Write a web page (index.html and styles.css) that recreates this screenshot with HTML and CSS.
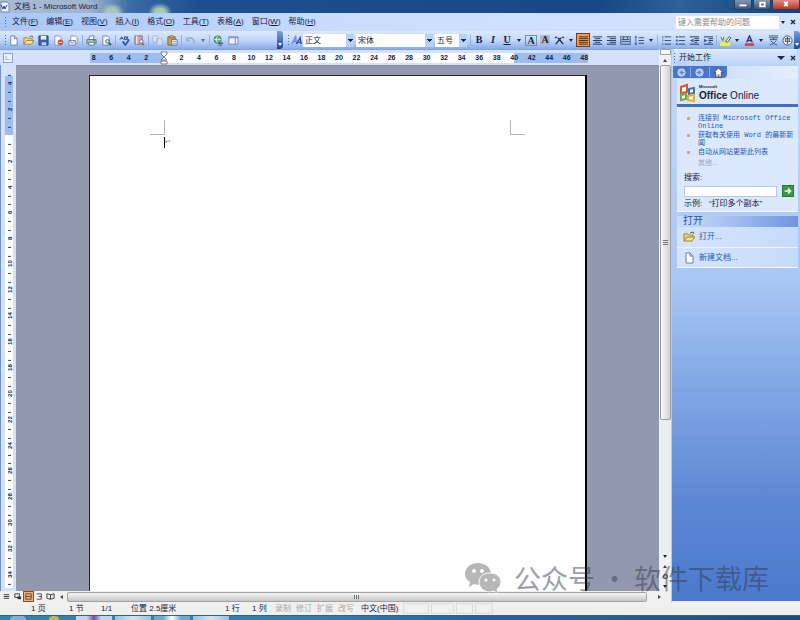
FILE: index.html
```html
<!DOCTYPE html>
<html lang="zh-CN">
<head>
<meta charset="utf-8">
<title>文档 1 - Microsoft Word</title>
<link rel="stylesheet" href="styles.css">
</head>
<body>
<div class="app">
  <header class="titlebar">
    <svg class="appicon" viewBox="0 0 10 12"><path d="M1 1h6l2 2v8H1z" fill="#eef4ff" stroke="#6c86b5"/><path d="M1 4l2 4 1-3 1 3 2-4" fill="none" stroke="#1d4fae"/></svg>
    <h1>文档 1 - Microsoft Word</h1>
    <div class="wincontrols">
      <button aria-label="最小化"><svg viewBox="0 0 12 10"><path d="M2 6h8" stroke="#fff" stroke-width="2"/></svg></button>
      <button aria-label="还原"><svg viewBox="0 0 12 10"><path d="M4 3h5v4H4z" fill="none" stroke="#fff" stroke-width="2"/></svg></button>
      <button class="close" aria-label="关闭"><svg viewBox="0 0 12 10"><path d="M4 2l4 5M8 2l-4 5" stroke="#fff" stroke-width="2"/></svg></button>
    </div>
  </header>

  <nav class="menubar">
    <i class="grip"></i>
    <button>文件(<u>F</u>)</button><button>编辑(<u>E</u>)</button><button>视图(<u>V</u>)</button><button>插入(<u>I</u>)</button><button>格式(<u>O</u>)</button><button>工具(<u>T</u>)</button><button>表格(<u>A</u>)</button><button>窗口(<u>W</u>)</button><button>帮助(<u>H</u>)</button>
    <input class="ask" type="text" aria-label="帮助" placeholder="键入需要帮助的问题">
    <button class="tiny" aria-label="更多"><i class="caret"></i></button>
    <button class="tiny" aria-label="关闭文档"><svg viewBox="0 0 8 8"><path d="M2 2l4 4M6 2L2 6" stroke="#17264d" stroke-width="1.4"/></svg></button>
  </nav>

  <div class="toolbars">
    <div class="toolbar standard">
      <i class="grip"></i>
      <button aria-label="新建"><svg viewBox="0 0 12 12"><path d="M3 1h4l3 3v7H3z" fill="#fff" stroke="#6d7f9f"/><path d="M7 1v3h3" fill="none" stroke="#6d7f9f"/></svg></button>
      <button aria-label="打开"><svg viewBox="0 0 12 12"><path d="M1 10V3h4l1 1h4v2" fill="#f6d873" stroke="#a5802c"/><path d="M1 10l3-4h8l-3 4z" fill="#fbe596" stroke="#a5802c"/><path d="M7 2l3-1 1 2" fill="none" stroke="#44618f"/></svg></button>
      <button aria-label="保存"><svg viewBox="0 0 12 12"><path d="M1 1h10v10H1z" fill="#3f62b4" stroke="#27408a"/><path d="M3 1h6v4H3z" fill="#eaf1ff"/><path d="M4 8h5v3H4z" fill="#c9d3ea"/></svg></button>
      <button aria-label="权限"><svg viewBox="0 0 12 12"><path d="M2 1h5l2 2v8H2z" fill="#fff" stroke="#8190ad"/><circle cx="8" cy="8" r="3" fill="#d24a36"/><path d="M6 8h4" stroke="#fff"/></svg></button>
      <button aria-label="电子邮件"><svg viewBox="0 0 12 12"><path d="M3 1h5l2 2v6H3z" fill="#fff" stroke="#8190ad"/><path d="M1 6h7v5H1zM1 6l3.500 3L8 6" fill="#eef2fc" stroke="#7786ab"/></svg></button>
      <i class="sep"></i>
      <button aria-label="打印"><svg viewBox="0 0 12 12"><path d="M4 1h5l-1 4H3z" fill="#fff" stroke="#697c91"/><path d="M1 5h10v4H1z" fill="#b5c7d0" stroke="#55707b"/><path d="M3 8h6v3H3z" fill="#fff" stroke="#55707b"/><path d="M8 6h2" stroke="#2a9d4a" stroke-width="2"/></svg></button>
      <button aria-label="打印预览"><svg viewBox="0 0 12 12"><path d="M2 1h5l2 2v8H2z" fill="#fff" stroke="#697c9d"/><circle cx="7" cy="7" r="2" fill="#bde7ee" stroke="#3e6d7a"/><path d="M8.500 8.500L11 11" stroke="#3e5b6a" stroke-width="2"/></svg></button>
      <i class="sep"></i>
      <button aria-label="拼写和语法"><svg viewBox="0 0 12 12"><path d="M1 5l2-3 2 3M2 4h2M6 2v3h2V2zM10 2H9v3h2" fill="none" stroke="#2c437e"/><path d="M4 7l3 4 4-6" fill="none" stroke="#2f59b7" stroke-width="2"/></svg></button>
      <button aria-label="信息检索"><svg viewBox="0 0 12 12"><path d="M1 1h8v9H1z" fill="#d9a7a3" stroke="#8a6583"/><path d="M3 1v9" stroke="#fff"/><circle cx="8" cy="7" r="2" fill="#e9efff" stroke="#5f6d94"/><path d="M9 9l2 2" stroke="#b16b36" stroke-width="2"/></svg></button>
      <i class="sep"></i>
      <button class="dim" aria-label="复制"><svg viewBox="0 0 12 12"><path d="M1 1h5v7H1zM5 4h6v7H5z" fill="#e7ecf6" stroke="#9aa9c7"/></svg></button>
      <button aria-label="粘贴"><svg viewBox="0 0 12 12"><path d="M1 2h8v9H1z" fill="#d3a047" stroke="#7c6435"/><path d="M3 1h4v2H3z" fill="#f4e7ad" stroke="#7c6435"/><path d="M5 5h6v6H5z" fill="#fff" stroke="#566d9e"/><path d="M6 7h4M6 9h4" stroke="#7890c0"/></svg></button>
      <i class="sep"></i>
      <button class="dim" aria-label="撤消"><svg viewBox="0 0 12 12"><path d="M3 4c4-2 7 0 7 5" fill="none" stroke="#8497c2" stroke-width="2"/><path d="M1 2v5h5z" fill="#8497c2"/></svg></button>
      <button class="tiny dim" aria-label="撤消列表"><i class="caret"></i></button>
      <i class="sep"></i>
      <button aria-label="超链接"><svg viewBox="0 0 12 12"><circle cx="5" cy="5" r="4" fill="#6db58a" stroke="#306e74"/><path d="M1 5h8M5 1c-2 3-2 5 0 8" fill="none" stroke="#d8f0e5"/><path d="M5 9h6M6 11h4" stroke="#53627c" stroke-width="1.500"/></svg></button>
      <button aria-label="表格和边框"><svg viewBox="0 0 12 12"><path d="M1 2h10v8H1z" fill="#edf3fe" stroke="#6985b7"/><path d="M1 3h10M8 3v7" stroke="#6985b7"/></svg></button>
      <button class="cap" aria-label="工具栏选项"><i class="caret light"></i></button>
    </div>
    <div class="toolbar format">
      <i class="grip"></i>
      <button aria-label="样式和格式"><svg viewBox="0 0 12 12"><path d="M1 10l4-8 1 8M3 7h3" fill="none" stroke="#6387d3" stroke-width="1.400"/><path d="M6 10l4-7 1 7M8 8h3" fill="none" stroke="#2e4aa2" stroke-width="1.400"/></svg></button>
      <label class="combo style"><select aria-label="样式"><option>正文</option></select></label>
      <label class="combo font"><select aria-label="字体"><option>宋体</option></select></label>
      <label class="combo size"><select aria-label="字号"><option>五号</option></select></label>
      <i class="sep"></i>
      <button class="glyph" aria-label="加粗"><b>B</b></button>
      <button class="glyph" aria-label="倾斜"><em>I</em></button>
      <button class="glyph" aria-label="下划线"><u>U</u></button>
      <button class="tiny" aria-label="下划线样式"><i class="caret"></i></button>
      <button class="glyph" aria-label="字符边框"><span class="boxed">A</span></button>
      <button class="glyph" aria-label="字符底纹"><span class="shaded">A</span></button>
      <button aria-label="字符缩放"><svg viewBox="0 0 12 12"><path d="M2 10l4-5 4 5M6 5L4 3M6 5l2-2M1 3l2-1M11 3L9 2" fill="none" stroke="#1c2e5c" stroke-width="1.500"/></svg></button>
      <button class="tiny" aria-label="字符缩放选项"><i class="caret"></i></button>
      <button class="active" aria-label="两端对齐"><svg viewBox="0 0 12 12"><path d="M1 2h10M1 4h10M1 6h10M1 8h10M1 10h10" stroke="#3a2b20"/></svg></button>
      <button aria-label="居中"><svg viewBox="0 0 12 12"><path d="M1 2h10M3 4h6M1 6h10M3 8h6M1 10h10" stroke="#1c2e5c"/></svg></button>
      <button aria-label="右对齐"><svg viewBox="0 0 12 12"><path d="M1 2h10M4 4h7M1 6h10M4 8h7M1 10h10" stroke="#1c2e5c"/></svg></button>
      <button aria-label="分散对齐"><svg viewBox="0 0 12 12"><path d="M1 1v10M11 1v10M2 2h8M2 5h8M2 7h8M2 10h8M4 2v3M8 2v3" stroke="#31446f"/></svg></button>
      <button aria-label="行距"><svg viewBox="0 0 12 12"><path d="M5 3h6M5 6h6M5 9h6" stroke="#31446f"/><path d="M2 2v8M1 3l1-2 1 2M1 9l1 2 1-2" fill="none" stroke="#3f65b5"/></svg></button>
      <button class="tiny" aria-label="行距选项"><i class="caret"></i></button>
      <i class="sep"></i>
      <button aria-label="编号"><svg viewBox="0 0 12 12"><path d="M4 2h7M4 6h7M4 10h7" stroke="#31446f"/><path d="M2 1v3M2 5v2M2 9v2" stroke="#3f65b5"/></svg></button>
      <button aria-label="项目符号"><svg viewBox="0 0 12 12"><path d="M4 2h7M4 6h7M4 10h7" stroke="#31446f"/><path d="M1 2h2M1 6h2M1 10h2" stroke="#3f65b5" stroke-width="2"/></svg></button>
      <button aria-label="减少缩进量"><svg viewBox="0 0 12 12"><path d="M1 2h10M6 4h5M6 6h5M6 8h3M1 10h10" stroke="#1c2e5c"/><path d="M5 4v4L1 6z" fill="#2f59b7"/></svg></button>
      <button aria-label="增加缩进量"><svg viewBox="0 0 12 12"><path d="M1 2h10M6 4h5M6 6h5M6 8h3M1 10h10" stroke="#1c2e5c"/><path d="M1 4v4l4-2z" fill="#2f59b7"/></svg></button>
      <i class="sep"></i>
      <button aria-label="突出显示"><svg viewBox="0 0 12 12"><path d="M0 8h11v4H0z" fill="#eff23a"/><path d="M1 2l2 4 1-4M6 7l4-5 2 1-4 5z" fill="#f8f5ce" stroke="#4d5b45"/></svg></button>
      <button class="tiny" aria-label="突出显示颜色"><i class="caret"></i></button>
      <button aria-label="字体颜色"><svg viewBox="0 0 12 12"><path d="M1 9h10v3H1z" fill="#e23c3c"/><path d="M3 8l3-7 3 7M4 6h4" fill="none" stroke="#25376a" stroke-width="1.500"/></svg></button>
      <button class="tiny" aria-label="字体颜色选项"><i class="caret"></i></button>
      <button aria-label="拼音指南"><svg viewBox="0 0 12 12"><path d="M1 1h10M1 3h10M2 5h8M6 3v2M3 6c2 3 4 4 7 5M9 6c-2 3-4 4-7 5" fill="none" stroke="#3b4f82"/></svg></button>
      <button aria-label="带圈字符"><svg viewBox="0 0 12 12"><circle cx="6" cy="6" r="5" fill="#eef3fd" stroke="#3f4e6e"/><path d="M3 4h6M6 2v8M3 7h6M4 4v3M8 4v3" stroke="#3f4e6e"/></svg></button>
      <button class="cap" aria-label="格式工具栏选项"><i class="caret light"></i></button>
    </div>
  </div>

  <main class="body">
    <section class="editor">
      <div class="hruler">
        <button class="tabstop" aria-label="制表符">∟</button>
        <div class="hscale">
          <span>8</span><span>6</span><span>4</span><span>2</span><span><svg class="indent" viewBox="0 0 8 14"><path d="M1 1h6v2L4 6 1 3zM1 9l3-3 3 3zM1 10h6v3H1z" fill="#fff" stroke="#777f91"/></svg></span><span>2</span><span>4</span><span>6</span><span>8</span><span>10</span><span>12</span><span>14</span><span>16</span><span>18</span><span>20</span><span>22</span><span>24</span><span>26</span><span>28</span><span>30</span><span>32</span><span>34</span><span>36</span><span>38</span><span>40</span><span>42</span><span>44</span><span>46</span><span>48</span>
        </div>
      </div>
      <div class="vruler">
        <div class="vscale">
          <span>4</span><span>2</span><span class="zero"></span><span>2</span><span>4</span><span>6</span><span>8</span><span>10</span><span>12</span><span>14</span><span>16</span><span>18</span><span>20</span><span>22</span><span>24</span><span>26</span><span>28</span><span>30</span><span>32</span><span>34</span>
        </div>
      </div>
      <div class="canvas">
        <article class="page">
          <div class="margins"><i class="corner left"></i><i class="corner right"></i></div>
          <p class="line"><i class="cursor"></i><span>↵</span></p>
        </article>
      </div>
      <div class="vscroll">
        <i class="split"></i>
        <button aria-label="向上滚动"><i class="caret up"></i></button>
        <div class="vtrack"><i class="vthumb"></i></div>
        <button aria-label="向下滚动"><i class="caret"></i></button>
        <button aria-label="前一页"><i class="caret up"></i></button>
        <button aria-label="选择浏览对象"><i class="ball"></i></button>
        <button aria-label="下一页"><i class="caret"></i></button>
      </div>
      <div class="hscroll">
        <button aria-label="普通视图"><svg viewBox="0 0 10 10"><path d="M2 3h6M2 5h6M2 7h6" stroke="#333"/></svg></button>
        <button aria-label="Web 版式视图"><svg viewBox="0 0 10 10"><path d="M2 2h5v4H2z" fill="none" stroke="#333"/><path d="M5 5h4v3H5z" fill="#333"/></svg></button>
        <button class="active" aria-label="页面视图"><svg viewBox="0 0 10 10"><path d="M2 2h6v6H2zM2 5h6" fill="none" stroke="#69401e"/></svg></button>
        <button aria-label="大纲视图"><svg viewBox="0 0 10 10"><path d="M2 2h5M4 5h4M2 8h5M7 2v6" stroke="#444"/></svg></button>
        <button aria-label="阅读版式"><svg viewBox="0 0 10 10"><path d="M1 2l4 1 4-1v5L5 8 1 7zM5 3v5" fill="none" stroke="#333"/></svg></button>
        <button aria-label="向左滚动"><i class="caret back"></i></button>
        <div class="htrack"><i class="hthumb"></i></div>
        <button aria-label="向右滚动"><i class="caret next"></i></button>
      </div>
    </section>

    <aside class="pane">
      <header class="panehead"><i class="grip"></i><h2>开始工作</h2><button class="tiny" aria-label="窗格列表"><i class="caret big"></i></button><button class="tiny" aria-label="关闭窗格"><svg viewBox="0 0 8 8"><path d="M2 2l4 4M6 2L2 6" stroke="#17264d" stroke-width="1.400"/></svg></button></header>
      <div class="panenav">
        <div class="navtab">
          <button aria-label="后退"><svg viewBox="0 0 12 12"><circle cx="6" cy="6" r="4" fill="#a6c0ef" stroke="#d2e0fa"/><path d="M7 4L5 6l2 2M5 6h4" fill="none" stroke="#5279c8"/></svg></button>
          <button aria-label="前进"><svg viewBox="0 0 12 12"><circle cx="6" cy="6" r="4" fill="#a6c0ef" stroke="#d2e0fa"/><path d="M5 4l2 2-2 2M7 6H3" fill="none" stroke="#5279c8"/></svg></button>
          <button aria-label="主页"><svg viewBox="0 0 12 12"><path d="M1 6l5-5 5 5H9v5H3V6z" fill="#fff" stroke="#33466e"/><path d="M5 8h2v3H5z" fill="#cb5f38"/></svg></button>
        </div>
      </div>
      <section class="card">
        <div class="brand">
          <svg viewBox="0 0 18 20"><path d="M2 4l6-2v7L2 10z" fill="#fff" stroke="#df5528" stroke-width="2"/><path d="M10 6l5-1v5l-5 1z" fill="#fff" stroke="#3e73c3" stroke-width="2"/><path d="M2 12l5-1v5l-5 1z" fill="#fff" stroke="#6caa42" stroke-width="2"/><path d="M9 13l6-1v6l-6-1z" fill="#fff" stroke="#edae2d" stroke-width="2"/></svg>
          <div class="wordmark"><small>Microsoft</small><p><strong>Office</strong> Online</p></div>
        </div>
        <ul class="links">
          <li><a href="#connect">连接到 Microsoft Office Online</a></li>
          <li><a href="#news">获取有关使用 Word 的最新新闻</a></li>
          <li><a href="#update">自动从网站更新此列表</a></li>
        </ul>
        <a class="other" href="#other">其他...</a>
        <form class="search">
          <label for="q">搜索:</label>
          <div class="searchrow"><input id="q" type="text"><button type="button" aria-label="搜索"><svg viewBox="0 0 12 12"><path d="M2 6h7M6 3l3 3-3 3" fill="none" stroke="#fff" stroke-width="2"/></svg></button></div>
          <p>示例:&nbsp;&nbsp; “打印多个副本”</p>
        </form>
      </section>
      <section class="card open">
        <h3>打开</h3>
        <a href="#open"><svg viewBox="0 0 12 12"><path d="M1 10V3h4l1 1h4v2" fill="#f6d873" stroke="#a5802c"/><path d="M1 10l3-4h8l-3 4z" fill="#fbe596" stroke="#a5802c"/><path d="M7 2l3-1 1 2" fill="none" stroke="#44618f"/></svg>打开...</a>
        <a href="#new"><svg viewBox="0 0 12 12"><path d="M3 1h4l3 3v7H3z" fill="#fff" stroke="#6d7f9f"/><path d="M7 1v3h3" fill="none" stroke="#6d7f9f"/></svg>新建文档...</a>
      </section>
    </aside>

    <div class="watermark">
      <svg viewBox="0 0 38 32"><path d="M14 1C6 1 1 6 1 12c0 4 2 6 5 8l-1 5 5-3 4 1c8 0 13-5 13-11S22 1 14 1z"/><path class="front" d="M26 11c-7 0-11 4-11 9s4 10 11 10l4-1 4 3-1-5c3-2 4-4 4-7 0-5-4-9-11-9z"/><g class="eyes"><circle cx="10" cy="9" r="2"/><circle cx="18" cy="9" r="2"/><circle cx="22" cy="18" r="1.500"/><circle cx="30" cy="18" r="1.500"/></g></svg>
      <span>公众号 · 软件下载库</span>
    </div>
  </main>

  <footer class="statusbar">
    <span>1 页</span><span>1 节</span><span>1/1</span><span>位置 2.5厘米</span><span>1 行</span><span>1 列</span><span class="off">录制</span><span class="off">修订</span><span class="off">扩展</span><span class="off">改写</span><span>中文(中国)</span><span class="box"></span><span class="box"></span><span class="box"></span><span class="box"></span>
  </footer>
  <div class="taskbar"><i class="orb"></i><i class="chrome"></i><i class="task purple"></i><i class="task"></i><i class="task round"></i><i class="task"></i></div>
</div>
</body>
</html>
```
FILE: styles.css
```css
* { box-sizing: border-box; }

body {
  margin: 0;
  font: 8px/10px "Liberation Sans", "Noto Sans CJK SC", sans-serif;
  color: #14213f;
}

button, input, select { font: inherit; color: inherit; margin: 0; padding: 0; border: 0; background: none; }
button { display: flex; align-items: center; justify-content: center; flex: none; white-space: nowrap; }
h1, h2, h3, p, ul { margin: 0; padding: 0; font-size: 8px; font-weight: 400; }
a { color: #2456b8; text-decoration: none; }
svg { display: block; }

.app { display: grid; grid-template-columns: minmax(0, 1fr); grid-template-rows: 13px 18px 18px 1fr 13px 5px; height: 100vh; overflow: hidden; background: #c4d9fa; }

/* title bar */
.titlebar {
  display: flex; align-items: center; gap: 4px;
  background:
    radial-gradient(ellipse 12px 9px at 112px 12px, #a9c9b8 40%, transparent),
    radial-gradient(ellipse 12px 9px at 160px 12px, #a9c9b8 40%, transparent),
    linear-gradient(90deg, #a9bcd4, #a0b4ce 90px, #3a6ba5 130px, #1c4f8d 200px, #174885 75%, #2c6297 85%, #174074);
}
.appicon { width: 10px; height: 12px; }
.titlebar h1 { color: #14233c; flex: 1; }
.wincontrols { display: flex; align-self: flex-start; gap: 1px; }
.wincontrols button { width: 18px; height: 10px; background: linear-gradient(#7f97b5, #3b587e); border: 1px solid #253f63; border-top: 0; border-radius: 0 0 3px 3px; }
.wincontrols .close { width: 28px; background: linear-gradient(#dc9083, #bb3522); }
.wincontrols svg { width: 12px; height: 9px; }

/* shared bits */
.grip { flex: none; width: 1px; height: 10px; background: repeating-linear-gradient(#51699b 0 1px, transparent 1px 3px); }
.sep { flex: none; width: 1px; height: 11px; background: #91aede; }
.caret { width: 0; height: 0; border: 2px solid transparent; border-top: 3px solid #17264d; border-bottom: 0; }
.caret.up { border-top: 0; border-bottom: 3px solid #444; }
.caret.back { border: 2px solid transparent; border-right: 3px solid #444; border-left: 0; }
.caret.next { border: 2px solid transparent; border-left: 3px solid #444; border-right: 0; }
.caret.big { border-width: 4px 4px 0; }
.caret.light { border-top-color: #fff; }
.tiny { width: 8px; height: 12px; }
.tiny svg { width: 8px; height: 8px; }
.dim { opacity: 0.6; }

/* menu */
.menubar { display: flex; align-items: center; gap: 8px; padding: 0 3px 0 5px; background: linear-gradient(90deg, #a9c6f7, #cadefc 45%, #d3e3fc); }
.menubar .grip { margin-right: -2px; }
.menubar .ask { width: 103px; height: 13px; margin-left: auto; padding: 0 2px; background: #fff; }
.menubar .ask::placeholder { color: #858b98; opacity: 1; }
.menubar .ask + .tiny { margin: 0 -6px 0 -8px; }

/* toolbars */
.toolbars { display: flex; }
.toolbar { display: flex; align-items: center; height: 18px; background: linear-gradient(#dce9fd, #c2d8f9 50%, #87ace8); }
.toolbar.standard { flex: none; width: 283px; padding-left: 5px; border-radius: 0 3px 3px 0; }
.toolbar.format { flex: 1; min-width: 0; padding-left: 5px; }
.toolbar button { width: 14px; height: 14px; }
.toolbar svg { width: 11px; height: 11px; }
.toolbar.standard button { width: 15px; }
.toolbar .tiny, .toolbar.standard .tiny { width: 10px; }
.toolbar .sep { margin: 0 1px; }
.toolbar .cap, .toolbar.standard .cap { width: 6px; height: 18px; margin-left: auto; align-items: flex-end; padding-bottom: 3px; background: linear-gradient(#789fe3, #1d469c); border-radius: 0 3px 3px 0; }
.glyph { font: 700 10px/12px "Liberation Serif", serif; }
.boxed { border: 1px solid #7489ae; padding: 0 1px; line-height: 9px; }
.shaded { background: #aeb8c6; padding: 0 1px; line-height: 10px; }
.toolbar .active { background: #f29d57; border: 1px solid #6c3f25; }
.combo { position: relative; height: 13px; margin-right: 2px; background: #fff; }
.combo select { appearance: none; width: 100%; height: 13px; padding: 0 2px; line-height: 13px; border-radius: 0; }
.combo::after { content: ""; position: absolute; right: 0; top: 0; width: 8px; height: 13px; background: linear-gradient(#17264d, #17264d) 2px 5px / 5px 1px no-repeat, linear-gradient(#17264d, #17264d) 3px 6px / 3px 1px no-repeat, linear-gradient(#17264d, #17264d) 4px 7px / 1px 1px no-repeat, #b9d1f6; pointer-events: none; }
.combo.style { width: 51px; }
.combo.font { width: 77px; }
.combo.size { width: 32px; }

/* editor */
.body { position: relative; display: grid; grid-template-columns: minmax(0, 1fr) 128px; min-height: 0; }
.editor { display: grid; grid-template: 16px 1fr 11px / 16px 1fr 12px; min-width: 0; min-height: 0; border-right: 1px solid #b4c9ec; background: #d3e2fa; }
.hruler { grid-column: 1 / 3; display: flex; align-items: center; gap: 72px; padding-left: 3px; border-top: 1px solid #7fa1dc; }
.tabstop { width: 10px; height: 10px; background: #edf3fd; border: 1px solid #8ba4cf; font-size: 7px; }
.hscale {
  display: grid; grid-template-columns: repeat(29, 1fr); width: 508px; height: 10px;
  font-size: 7px; font-weight: 700; text-align: center;
  background: linear-gradient(90deg, transparent 1%, #9dbcf0 1% 15.500%, #fff 15.500% 84.500%, #9dbcf0 84.500% 99%, transparent 99%);
}
.indent { width: 8px; height: 14px; margin: -2px auto 0; }
.vruler { padding: 5px 3px 3px 4px; border-left: 1px solid #7491c4; overflow: hidden; }
.vscale { display: grid; grid-template-rows: repeat(20, 1fr); height: 100%; background: linear-gradient(transparent 6px, #9dbcf0 6px 12.500%, #fff 12.500%); font-size: 6px; font-weight: 700; }
.vscale span { display: flex; align-items: center; justify-content: center; writing-mode: vertical-rl; transform: rotate(180deg); background: linear-gradient(#444, #444) 50% 3px / 3px 1px no-repeat, linear-gradient(#444, #444) 50% 20px / 3px 1px no-repeat; }
.canvas { background: #9299ae; padding: 9px 72px 0 73px; border-top: 1px solid #858ca2; min-height: 0; }
.page { height: 100%; background: #fff; border: 1px solid #222733; border-right: 2px solid #000; border-bottom: 0; padding: 44px 60px 0; }
.margins { display: flex; justify-content: space-between; }
.corner { width: 15px; height: 15px; border-bottom: 1px solid #b4b4b4; }
.corner.left { border-right: 1px solid #b4b4b4; }
.corner.right { border-left: 1px solid #b4b4b4; }
.line { display: flex; align-items: center; margin-left: 14px; color: #888; font-size: 7px; }
.cursor { width: 1px; height: 11px; margin-top: 2px; background: #000; }

/* scroll bars */
.vscroll { grid-column: 3; grid-row: 1 / 3; display: flex; flex-direction: column; align-items: center; background: #f0f0f0; }
.vscroll .split { width: 11px; height: 6px; border: 1px solid #9aa2b0; background: #fff; }
.vscroll button { width: 12px; height: 10px; }
.vtrack { flex: 1; width: 11px; background: #ededed; }
.vthumb { display: flex; align-items: center; justify-content: center; height: 73%; border: 1px solid #999da4; border-radius: 2px; background: linear-gradient(90deg, #f9f9f9, #d1d2d4); }
.vthumb::after { content: ""; width: 5px; height: 5px; background: repeating-linear-gradient(#777 0 1px, transparent 1px 2px); }
.ball { width: 5px; height: 5px; border: 1px solid #333; border-radius: 50%; }
.hscroll { grid-column: 1 / -1; display: flex; align-items: center; padding-left: 1px; background: #f0f0f0; }
.hscroll button { width: 11px; height: 11px; }
.hscroll svg { width: 9px; height: 9px; }
.hscroll .active { background: #f0b07b; border: 1px solid #80512b; }
.htrack { flex: 1; height: 10px; }
.hthumb { display: flex; align-items: center; justify-content: center; height: 10px; border: 1px solid #a3a3a3; border-radius: 2px; background: linear-gradient(#f7f7f7, #c5c5c5); }
.hthumb::after { content: ""; width: 6px; height: 4px; background: repeating-linear-gradient(90deg, #777 0 1px, transparent 1px 2px); }
.hscroll .htrack + button { width: 24px; }

/* task pane */
.pane { background: linear-gradient(#c4dafa, #a9c7f4 42%, #83a9e5 60%, #5d87d3 82%, #4b79cd); border-bottom: 1px solid #e8eefa; padding: 0 2px 0 1px; }
.panehead { display: flex; align-items: center; gap: 4px; height: 17px; margin: 0 1px; background: linear-gradient(#d9e7fd, #b9d2f8); border-top: 1px solid #eaf2fe; }
.panehead h2 { flex: 1; }
.panenav { height: 13px; background: linear-gradient(90deg, #c0d7fa, #e5effe); }
.navtab { display: flex; align-items: center; width: 54px; height: 12px; background: #4976c9; border-radius: 0 0 4px 0; }
.navtab button { flex: 1; height: 10px; border-right: 1px solid #86a6df; }
.navtab button:last-child { border: 0; }
.navtab svg { width: 11px; height: 11px; }
.card { margin-left: 4px; background: #dbe8fd; border-bottom: 1px solid #f3f8ff; font-size: 7px; line-height: 8px; }
.brand { display: flex; align-items: center; gap: 2px; height: 28px; padding: 3px 0 0 2px; border-bottom: 3px solid #3e6fc0; }
.brand svg { width: 18px; height: 20px; }
.wordmark { display: grid; color: #142342; white-space: nowrap; }
.wordmark small { font-size: 4px; line-height: 6px; font-weight: 700; }
.wordmark p { font-size: 10px; line-height: 12px; }
.links { list-style: none; padding: 7px 0 0 21px; font: 7px/8px "Liberation Mono", "Noto Sans CJK SC", monospace; }
.links li { position: relative; margin-bottom: 1px; }
.links li::before { content: ""; position: absolute; left: -11px; top: 3px; width: 3px; height: 3px; background: #e2a465; }
.other { display: block; margin: 3px 0 0 21px; color: #99a3b5; }
.search { padding: 7px 4px 3px 7px; }
.search label { display: block; font-size: 8px; }
.searchrow { display: flex; align-items: center; gap: 5px; margin: 3px 0; }
.searchrow input { flex: 1; min-width: 0; height: 11px; background: #fff; border: 1px solid #b5c8e8; }
.searchrow button { width: 12px; height: 12px; background: #3a9a44; border: 1px solid #2a7634; }
.searchrow svg { width: 10px; height: 10px; }
.search p { font-size: 8px; }
.open { margin-top: 4px; font-size: 8px; background: linear-gradient(90deg, #d5e4fc, #c6dbfa); border-bottom: 1px solid #f3f8ff; }
.open h3 { height: 11px; padding-left: 6px; font-size: 10px; line-height: 10px; color: #2752a5; background: linear-gradient(90deg, #c9dcfb, #a9c2f1 40%, #6f95df); }
.open a { display: flex; align-items: center; gap: 4px; height: 20px; padding-left: 6px; }
.open a + a { border-top: 1px solid #eef5ff; }
.open svg { width: 12px; height: 12px; }

/* floating mark */
.watermark { position: absolute; right: 31px; bottom: 6px; display: flex; align-items: center; gap: 12px; font: 400 27px/36px "Noto Sans CJK SC", sans-serif; color: #32384a; opacity: 0.48; white-space: nowrap; }
.watermark svg { width: 38px; height: 32px; fill: #6a6a6a; }
.watermark .front { stroke: #fff; stroke-width: 1; }
.watermark .eyes { fill: #fff; }

/* status and task bars */
.statusbar {
  display: grid; grid-template-columns: 38px 32px 30px 94px 27px 23px 21px 21px 21px 23px 40px 28px 25px 19px 20px; align-items: center;
  padding-left: 31px; background: #f0f0f0; white-space: nowrap; overflow: hidden; line-height: 12px;
}
.statusbar .off { color: #a9a9a9; }
.statusbar .box { height: 11px; margin-left: 2px; border: 1px solid #ddd; }
.taskbar { display: flex; gap: 3px; padding-left: 10px; background: linear-gradient(90deg, #2b88ad, #2a82b4 40%, #1d64a6 60%, #1e6396 75%, #164b7e); border-top: 1px solid #3b607c; overflow: hidden; }
.orb { width: 16px; background: #77b5d7; border-radius: 8px 8px 0 0; }
.chrome { width: 10px; margin: 0 14px 0 20px; background: #b9b84e; border-radius: 5px 5px 0 0; }
.task { width: 36px; background: linear-gradient(90deg, #8dc5dd, #d6e6ee, #8dc5dd); }
.task.purple { background: linear-gradient(90deg, #bcd9ea 30%, #7a48b0 50%, #bcd9ea 70%); }
.task.round { background: linear-gradient(90deg, #67add0 25%, #fff 50%, #67add0 75%); }
```
